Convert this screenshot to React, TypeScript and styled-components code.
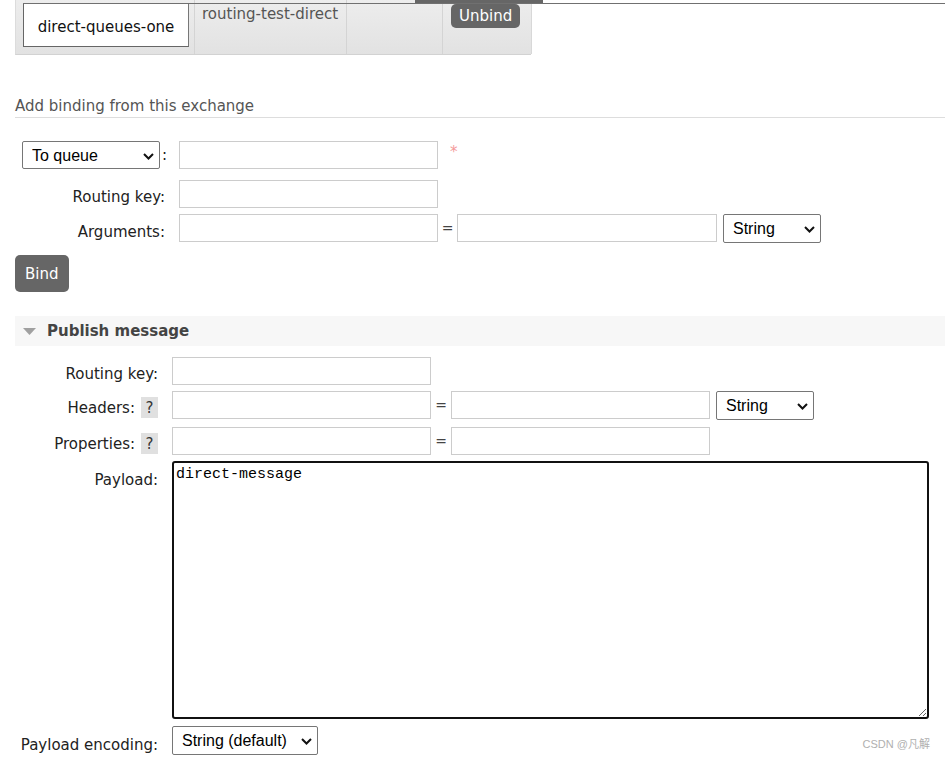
import React from "react";
import styled, { createGlobalStyle } from "styled-components";

const Global = createGlobalStyle`
  html, body { margin: 0; padding: 0; background: #fff; }
  body { font-family: "DejaVu Sans", Verdana, sans-serif; font-size: 15px; color: #333; }
  * { box-sizing: border-box; }
`;

const Page = styled.div`
  position: relative;
  width: 945px;
  height: 759px;
  overflow: hidden;
  background: #fff;
`;

/* ---------- bindings table (clipped at top) ---------- */
const TopArea = styled.div`
  position: relative;
  height: 55px;
  padding-left: 15px;
`;

const EdgeLine = styled.div`
  position: absolute;
  left: 23px;
  right: 0;
  top: 3px;
  height: 1px;
  background: #707070;
`;

const ClippedButton = styled.div`
  position: absolute;
  left: 415px;
  top: 0;
  width: 128px;
  height: 3px;
  background: #666;
`;

const BindTable = styled.div`
  display: grid;
  grid-template-columns: 179px 152px 96px 89px;
  width: 516px;
  height: 55px;
  border-left: 1px solid #dcdcdc;
  border-bottom: 1px solid #d2d2d2;
`;

const Cell = styled.div<{ $last?: boolean }>`
  background: linear-gradient(#ededed, #e2e2e2);
  border-right: 1px solid ${(p) => (p.$last ? "#d8d8d8" : "#d4d4d4")};
  padding: 5px 0 0 7px;
  color: #555;
  line-height: 18px;
  white-space: nowrap;
`;

const QueueBox = styled.div`
  margin: -2px 0 0 0;
  width: 166px;
  height: 44px;
  padding-top: 3px;
  background: #fff;
  border: 1px solid #666;
  border-right-color: #777;
  color: #111;
  display: flex;
  align-items: center;
  justify-content: center;
`;

const SmallButton = styled.button`
  margin: -1px 0 0 1px;
  height: 24px;
  padding: 0 8px;
  border: none;
  border-radius: 5px;
  background: #666;
  color: #fff;
  font-family: inherit;
  font-size: 15px;
  line-height: 24px;
`;

/* ---------- section heading ---------- */
const SectionTitle = styled.h3`
  margin: 40px 0 0 15px;
  padding: 1px 0 1px 0;
  font-weight: normal;
  font-size: 15px;
  line-height: 20px;
  color: #555;
  border-bottom: 1px solid #ddd;
`;

/* ---------- form ---------- */
const Form = styled.div<{ $top: number }>`
  margin-top: ${(p) => p.$top}px;
  display: flex;
  flex-direction: column;
`;

const Row = styled.div<{ $gap?: number }>`
  display: flex;
  align-items: flex-start;
  margin-top: ${(p) => p.$gap ?? 0}px;
`;

const Label = styled.div<{ $w: number; $pt?: number }>`
  width: ${(p) => p.$w}px;
  flex: none;
  display: flex;
  justify-content: flex-end;
  align-items: flex-start;
  gap: 6px;
  padding-top: ${(p) => p.$pt ?? 7}px;
  line-height: 20px;
  color: #222;
  white-space: nowrap;
`;

const LabelCell = styled.div`
  width: 165px;
  height: 28px;
  flex: none;
  padding-left: 22px;
  display: flex;
  align-items: center;
  line-height: 28px;
  color: #222;
`;

const Colon = styled.span`
  margin-left: 2px;
`;

const Help = styled.span`
  display: inline-flex;
  align-items: center;
  justify-content: center;
  width: 17px;
  height: 21px;
  margin-top: -1px;
  background: #e0e0e0;
  color: #333;
  font-size: 15px;
`;

const Input = styled.input<{ $w?: number; $ml?: number }>`
  width: ${(p) => p.$w ?? 259}px;
  margin-left: ${(p) => p.$ml ?? 0}px;
  height: 28px;
  border: 1px solid #ccc;
  background: #fff;
  padding: 0 4px;
  font-family: inherit;
  font-size: 15px;
  outline: none;
`;

const Eq = styled.span<{ $w: number }>`
  width: ${(p) => p.$w}px;
  text-align: center;
  line-height: 28px;
  color: #444;
  font-size: 14px;
`;

const SelectWrap = styled.div<{ $w: number; $ml?: number }>`
  position: relative;
  width: ${(p) => p.$w}px;
  margin-left: ${(p) => p.$ml ?? 0}px;
  flex: none;
`;

const Select = styled.select<{ $h?: number }>`
  appearance: none;
  -webkit-appearance: none;
  display: block;
  width: 100%;
  height: ${(p) => p.$h ?? 29}px;
  border: 1px solid #767676;
  border-radius: 2px;
  background: #fff;
  color: #000;
  padding: 0 0 0 9px;
  font-family: "Liberation Sans", Arial, sans-serif;
  font-size: 16px;
  outline: none;
`;

const Chevron = styled.svg`
  position: absolute;
  right: 6px;
  top: 12px;
  pointer-events: none;
`;

const Required = styled.span`
  margin: 3px 0 0 12px;
  color: #f49a9a;
  font-size: 15px;
  line-height: 16px;
`;

const BindButton = styled.button`
  margin: 12px 0 0 15px;
  align-self: flex-start;
  height: 37px;
  padding: 0 10px;
  border: none;
  border-radius: 5px;
  background: #666;
  color: #fff;
  font-family: inherit;
  font-size: 15px;
`;

/* ---------- publish ---------- */
const PanelHeader = styled.div`
  margin: 24px 0 0 15px;
  height: 30px;
  background: #f7f7f7;
  display: flex;
  align-items: center;
  gap: 11px;
  padding-left: 8px;
  font-weight: bold;
  font-size: 15px;
  color: #444;
`;

const Payload = styled.textarea`
  width: 757px;
  height: 258px;
  margin-left: 14px;
  border: 2px solid #111;
  border-radius: 3px;
  padding: 3px 2px;
  font-family: "Liberation Mono", "Courier New", monospace;
  font-size: 15px;
  line-height: 18px;
  color: #000;
  outline: none;
  resize: both;
`;

const Watermark = styled.div`
  position: absolute;
  right: 15px;
  bottom: 8px;
  font-family: "Liberation Sans", "Noto Sans CJK SC", sans-serif;
  font-size: 11px;
  color: #b0b0b0;
`;

const Caret = () => (
  <Chevron width="11" height="7" viewBox="0 0 11 7">
    <polyline points="1,1 5.5,5.5 10,1" fill="none" stroke="#111" strokeWidth="2" />
  </Chevron>
);

const Dropdown = ({
  w,
  ml,
  h,
  value,
  options,
}: {
  w: number;
  ml?: number;
  h?: number;
  value: string;
  options: string[];
}) => (
  <SelectWrap $w={w} $ml={ml}>
    <Select $h={h} defaultValue={value}>
      {options.map((o) => (
        <option key={o}>{o}</option>
      ))}
    </Select>
    <Caret />
  </SelectWrap>
);

const types = ["String", "Number", "Boolean", "List"];

export default function App() {
  return (
    <Page>
      <Global />
      <TopArea>
        <BindTable>
          <Cell>
            <QueueBox>direct-queues-one</QueueBox>
          </Cell>
          <Cell>routing-test-direct</Cell>
          <Cell />
          <Cell $last>
            <SmallButton>Unbind</SmallButton>
          </Cell>
        </BindTable>
        <EdgeLine />
        <ClippedButton />
      </TopArea>

      <SectionTitle>Add binding from this exchange</SectionTitle>

      <Form $top={23}>
        <Row>
          <LabelCell>
            <Dropdown w={138} h={28} value="To queue" options={["To queue", "To exchange"]} />
            <Colon>:</Colon>
          </LabelCell>
          <Input $ml={14} />
          <Required>*</Required>
        </Row>
        <Row $gap={11}>
          <Label $w={165}>Routing key:</Label>
          <Input $ml={14} />
        </Row>
        <Row $gap={6}>
          <Label $w={165} $pt={8}>Arguments:</Label>
          <Input $ml={14} />
          <Eq $w={19}>=</Eq>
          <Input $w={260} />
          <Dropdown w={98} ml={6} value="String" options={types} />
        </Row>
        <BindButton>Bind</BindButton>
      </Form>

      <PanelHeader>
        <svg width="13" height="7" viewBox="0 0 13 7">
          <polygon points="0,0 13,0 6.5,7" fill="#a0a0a0" />
        </svg>
        Publish message
      </PanelHeader>

      <Form $top={11}>
        <Row>
          <Label $w={158}>Routing key:</Label>
          <Input $ml={14} />
        </Row>
        <Row $gap={6}>
          <Label $w={158}>
            Headers: <Help>?</Help>
          </Label>
          <Input $ml={14} />
          <Eq $w={20}>=</Eq>
          <Input />
          <Dropdown w={98} ml={6} value="String" options={types} />
        </Row>
        <Row $gap={7}>
          <Label $w={158}>
            Properties: <Help>?</Help>
          </Label>
          <Input $ml={14} />
          <Eq $w={20}>=</Eq>
          <Input />
        </Row>
        <Row $gap={6}>
          <Label $w={158} $pt={9}>Payload:</Label>
          <Payload defaultValue="direct-message" />
        </Row>
        <Row $gap={7}>
          <Label $w={158} $pt={9}>Payload encoding:</Label>
          <Dropdown w={146} ml={14} value="String (default)" options={["String (default)", "Base64"]} />
        </Row>
      </Form>

      <Watermark>CSDN @凡解</Watermark>
    </Page>
  );
}
